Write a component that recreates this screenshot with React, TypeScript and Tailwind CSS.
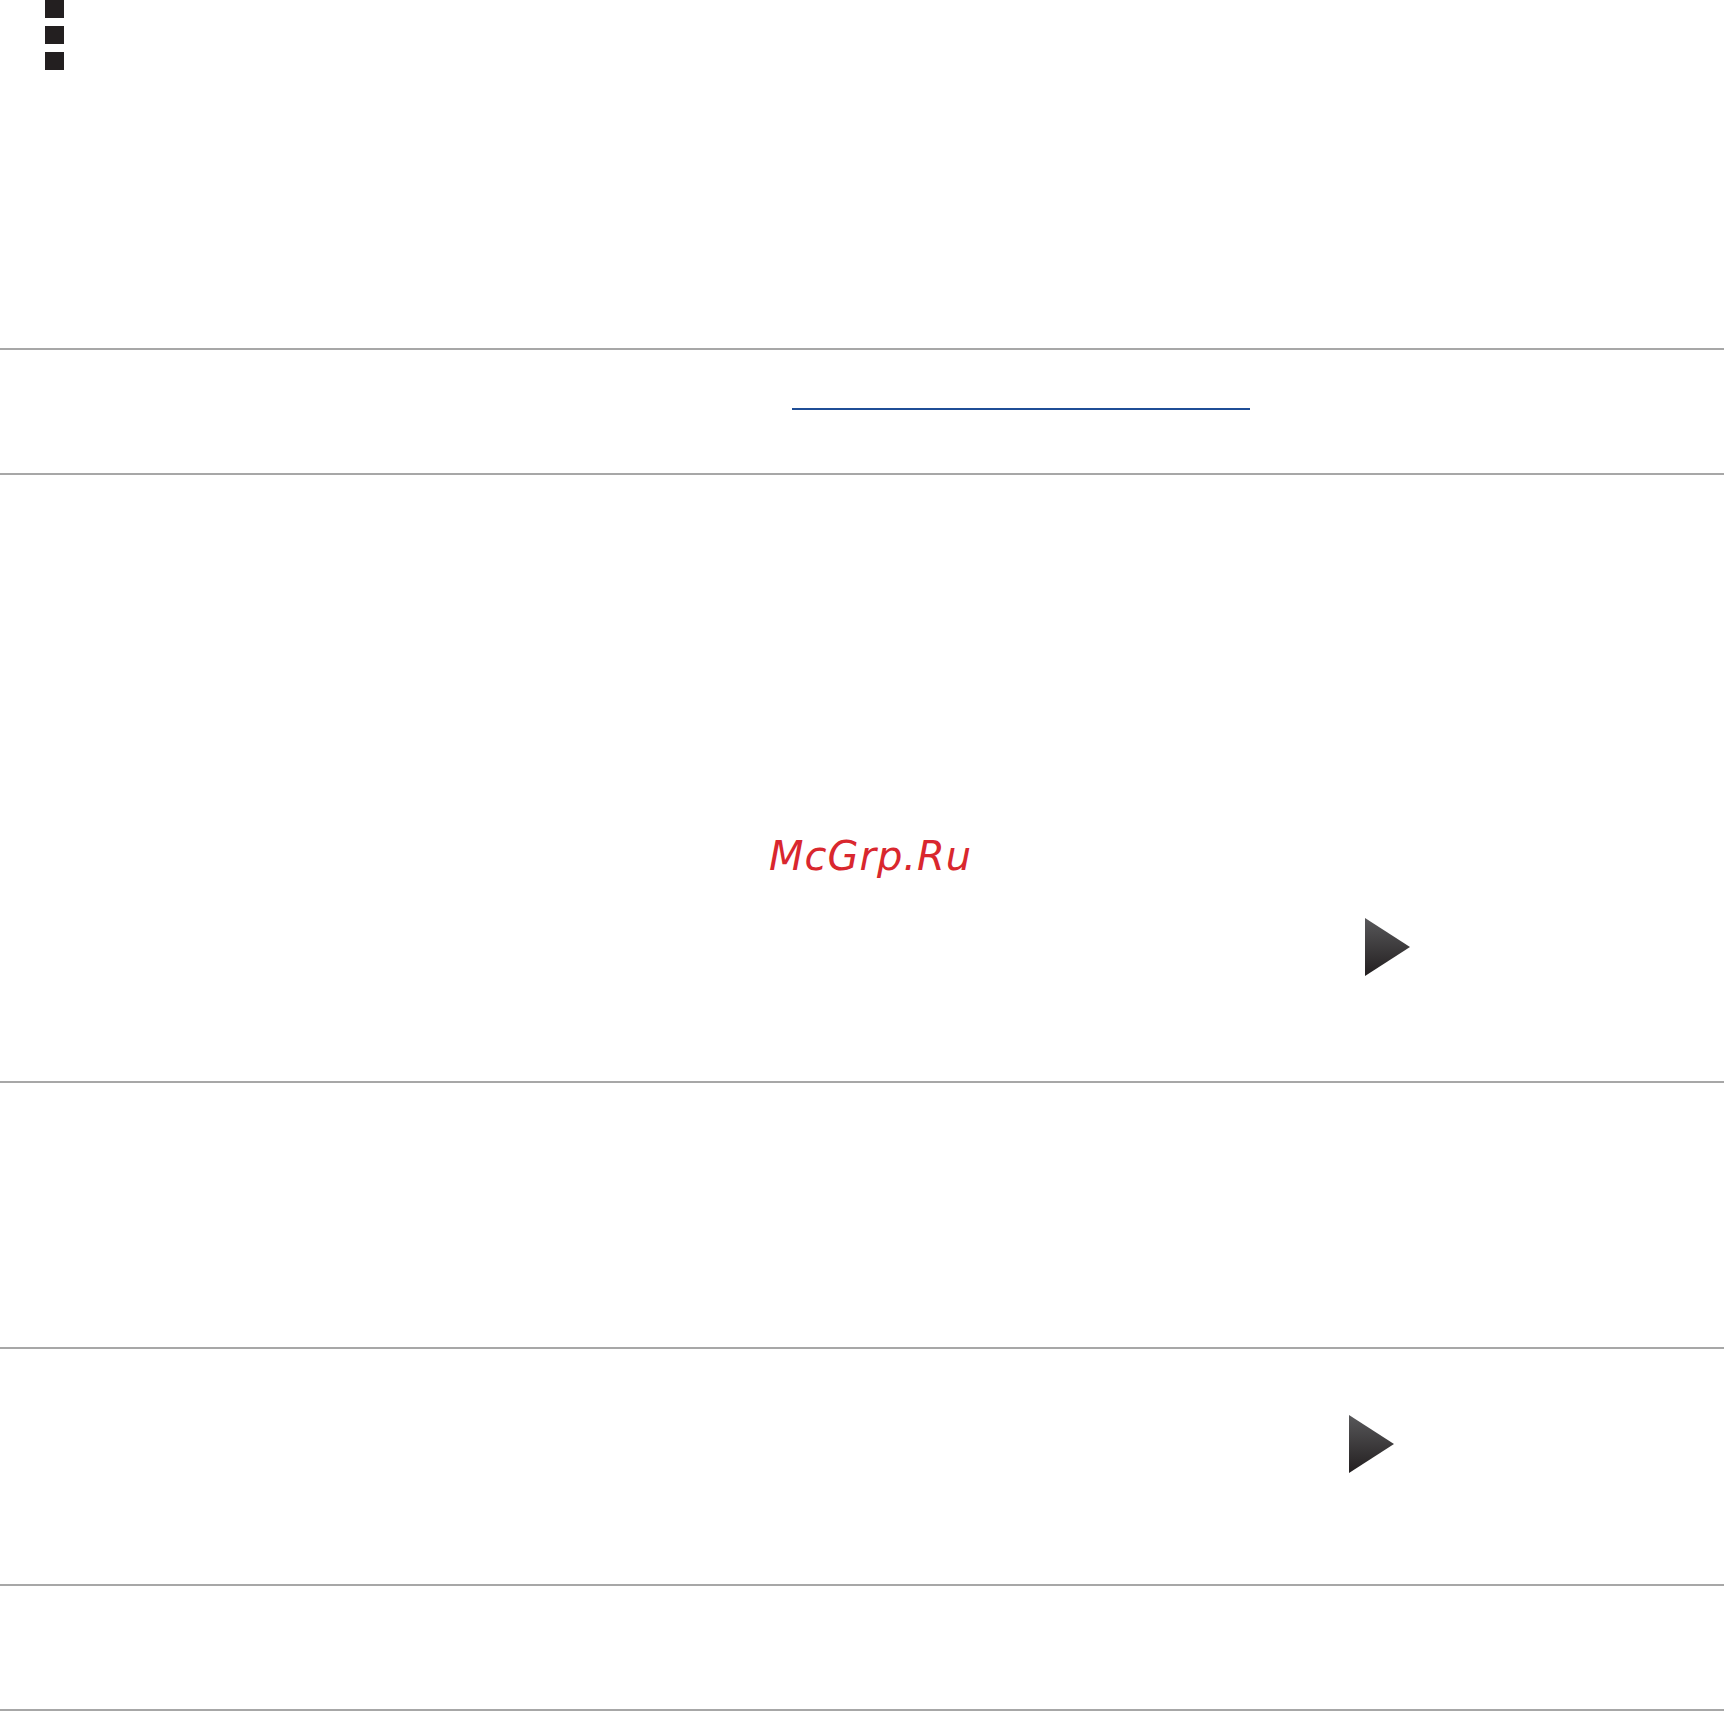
import React from 'react';

const Play: React.FC<{ id: string }> = ({ id }) => (
  <svg width="45" height="58" viewBox="0 0 45 58" className="block">
    <defs>
      <linearGradient id={id} x1="0" y1="0" x2="0" y2="1">
        <stop offset="0" stopColor="#58585a" />
        <stop offset="1" stopColor="#231f20" />
      </linearGradient>
    </defs>
    <polygon points="0,0 45,29 0,58" fill={`url(#${id})`} />
  </svg>
);

const App: React.FC = () => {
  return (
    <div className="w-[1724px] bg-white" style={{ fontFamily: '"DejaVu Sans", sans-serif' }}>
      <div className="h-[350px] border-b-2 border-[#a7a7a7]">
        <div className="flex flex-col gap-[8px] pl-[45px]">
          <div className="w-[19px] h-[18px] bg-[#231f20]" />
          <div className="w-[19px] h-[18px] bg-[#231f20]" />
          <div className="w-[19px] h-[18px] bg-[#231f20]" />
        </div>
      </div>
      <div className="h-[125px] border-b-2 border-[#a7a7a7] pt-[58px]">
        <div className="ml-[792px] w-[458px] h-[2px] bg-[#1f4e96]" />
      </div>
      <div className="h-[608px] border-b-2 border-[#a7a7a7] pt-[361px]">
        <div className="ml-[769px] text-[40px] leading-none italic tracking-[1px] text-[#d9272e]">McGrp.Ru</div>
        <div className="ml-[1365px] mt-[42px]">
          <Play id="g1" />
        </div>
      </div>
      <div className="h-[266px] border-b-2 border-[#a7a7a7]" />
      <div className="h-[237px] border-b-2 border-[#a7a7a7] pt-[66px]">
        <div className="ml-[1349px]">
          <Play id="g2" />
        </div>
      </div>
      <div className="h-[125px] border-b-2 border-[#a7a7a7]" />
    </div>
  );
};

export default App;
